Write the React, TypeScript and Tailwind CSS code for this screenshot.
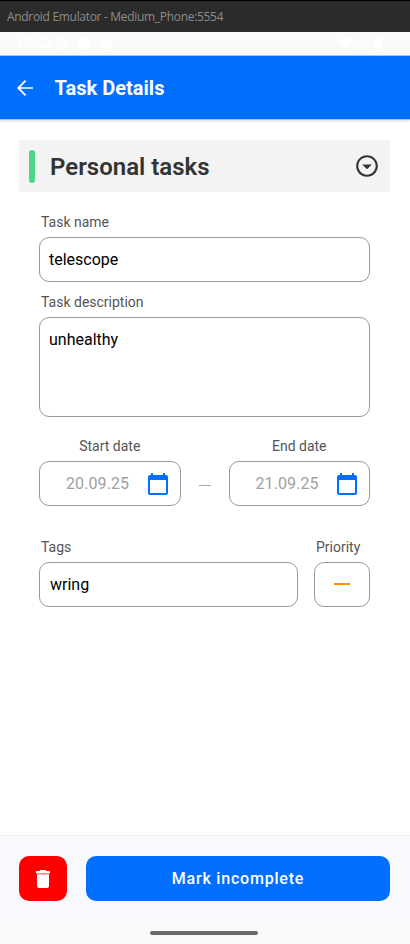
import type { ReactNode } from "react";

function Label({ children, className = "" }: { children: ReactNode; className?: string }) {
  return <div className={`text-[14px] leading-5 text-[#555] ${className}`}>{children}</div>;
}

function CalendarIcon() {
  return (
    <svg viewBox="0 0 24 24" className="size-6" fill="#006eff">
      <path d="M20 3h-1V1h-2v2H7V1H5v2H4c-1.100 0-2 .9-2 2v16c0 1.100.9 2 2 2h16c1.100 0 2-.9 2-2V5c0-1.100-.9-2-2-2zm0 18H4V8h16v13z" />
    </svg>
  );
}

function DateField({ label, value }: { label: string; value: string }) {
  return (
    <div className="w-[141.5px]">
      <Label className="text-center">{label}</Label>
      <div className="mt-[5px] flex h-[45px] items-center rounded-[10px] border border-[#999] pr-[10px] pl-[26px]">
        <span className="flex-1 text-[16px] tracking-[0.1px] text-[#a0a0a0]">{value}</span>
        <CalendarIcon />
      </div>
    </div>
  );
}

export default function App() {
  return (
    <div className="flex h-[944px] w-[410px] flex-col overflow-hidden bg-white font-[Roboto,sans-serif]">
      <div className="flex h-8 shrink-0 items-center border-t border-black bg-[#2b2b2b] pl-[7px] font-['Open_Sans',sans-serif] text-[12px] tracking-[-0.31px] text-[#8c8c8c]">
        Android Emulator - Medium_Phone:5554
      </div>
      <div className="flex h-6 shrink-0 items-center justify-between border-b border-[#a8cbf8] bg-[#fafafa] pr-[28px] pl-4 text-white">
        <div className="flex items-center">
          <span className="w-[39px] text-[14px] font-medium">10:52</span>
          <svg viewBox="0 0 12 14" className="h-[13px] w-3" fill="none" stroke="white" strokeWidth="1.5">
            <path d="M6 1l5 2v4c0 3-2 5-5 6-3-1-5-3-5-6V3zM2 2l8 9" />
          </svg>
          <svg viewBox="0 0 12 12" className="ml-[11px] size-3" fill="white">
            <path d="M4 0h7v12H0V4z" />
          </svg>
          <span className="ml-[11px] flex size-[10px] items-center justify-center rounded-[2px] bg-white text-[9px] font-bold text-[#fafafa]">A</span>
        </div>
        <svg viewBox="0 0 44 14" className="h-[14px] w-11" fill="white">
          <path d="M0 3q7.500-5 15 0L7.500 13zM37 2h2V0h3v2h2v12h-7z" />
          <path d="M17.500 12.500l10-10v10z" fill="none" stroke="white" strokeWidth="1.500" />
        </svg>
      </div>
      <header className="flex h-16 shrink-0 items-center border-b border-[#9cc6fb] bg-[#006eff] pl-[13px] text-white shadow-[0_1px_3px_rgba(0,0,0,0.15)]">
        <svg viewBox="0 0 24 24" className="size-6" fill="white">
          <path d="M20 11.200H7.300l5.900-5.900L12 4l-8 8 8 8 1.200-1.200-5.900-6H20z" />
        </svg>
        <h1 className="ml-[17.5px] text-[20px] font-bold tracking-[0.02px]">Task Details</h1>
      </header>

      <main className="flex-1 px-[19px] pt-5">
        <div className="flex h-[52px] w-[371px] items-center bg-[#f3f3f3] px-[10px]">
          <div className="h-[33px] w-[6px] rounded-full bg-[#4ad885]" />
          <h2 className="ml-[15px] flex-1 pt-px text-[24px] font-semibold text-[#333]">Personal tasks</h2>
          <svg viewBox="0 0 24 24" className="size-[26px]" fill="#333">
            <path d="M12 4c4.410 0 8 3.590 8 8s-3.590 8-8 8-8-3.590-8-8 3.590-8 8-8m0-2C6.480 2 2 6.480 2 12s4.480 10 10 10 10-4.480 10-10S17.520 2 12 2zm0 13l-4.500-4.500h9L12 15z" />
          </svg>
        </div>

        <div className="mt-5 ml-5 w-[331px]">
          <Label className="pl-[2px]">Task name</Label>
          <div className="mt-[5px] flex h-[45px] items-center rounded-[10px] border border-[#999] px-[9px] text-[16px] text-black">
            telescope
          </div>
          <Label className="mt-[10px] pl-[2px]">Task description</Label>
          <div className="mt-[5px] h-[100px] rounded-[10px] border border-[#999] px-[9px] pt-[10px] text-[16px] leading-6 text-black">
            unhealthy
          </div>
          <div className="mt-[19px] flex items-end justify-between">
            <DateField label="Start date" value="20.09.25" />
            <div className="mb-[20px] h-[1.5px] w-3 bg-[#a8a8a8]" />
            <DateField label="End date" value="21.09.25" />
          </div>
          <div className="mt-[31px] flex justify-between">
            <div className="w-[259px]">
              <Label className="pl-[2px]">Tags</Label>
              <div className="mt-[5px] flex h-[45px] items-center rounded-[10px] border border-[#999] px-[10px] text-[16px] text-black">
                wring
              </div>
            </div>
            <div className="w-14">
              <Label className="pl-[2px]">Priority</Label>
              <div className="mt-[5px] flex h-[45px] items-center justify-center rounded-[10px] border border-[#999] pb-px">
                <div className="h-[2px] w-4 bg-[#ff9010]" />
              </div>
            </div>
          </div>
        </div>
      </main>

      <footer className="flex h-[86px] shrink-0 gap-[19px] border-t border-[#eeeff1] bg-[#f8f9fc] px-[19px] pt-5">
        <button className="flex h-[45px] w-12 items-center justify-center rounded-[10px] bg-[#ff0000]">
          <svg viewBox="0 0 24 24" className="size-6" fill="white">
            <path d="M6 19c0 1.100.9 2 2 2h8c1.100 0 2-.9 2-2V7.300H6V19zM19 4h-3.500l-1-1h-5l-1 1H5v2.500h14V4z" />
          </svg>
        </button>
        <button className="h-[45px] w-[304px] rounded-[10px] bg-[#006eff] text-[16px] font-medium tracking-[0.8px] text-white">
          Mark incomplete
        </button>
      </footer>
      <div className="flex h-[23px] shrink-0 justify-center bg-[#fafafa] pt-[10px] pr-[2px]">
        <div className="h-1 w-[108px] rounded-full bg-[#6b6b6b]" />
      </div>
    </div>
  );
}
